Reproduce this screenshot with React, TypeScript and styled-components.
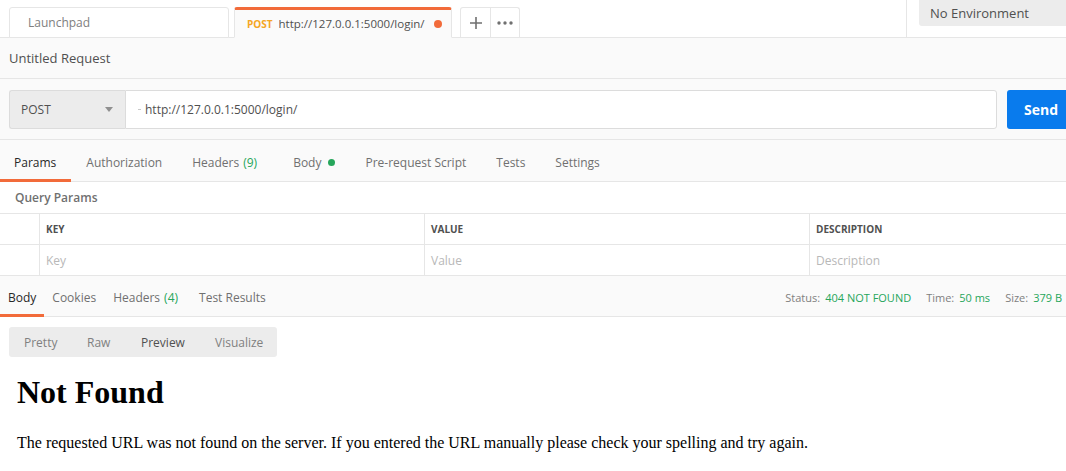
import React from "react";
import styled, { createGlobalStyle } from "styled-components";

const Global = createGlobalStyle`
  html, body { margin: 0; padding: 0; background: #ffffff; }
  body { font-family: "Open Sans", "Liberation Sans", sans-serif; overflow: hidden; }
  * { box-sizing: border-box; }
`;

const Page = styled.div`
  width: 1066px;
  height: 471px;
  display: flex;
  flex-direction: column;
  overflow: hidden;
`;

const TopBar = styled.div`
  height: 38px;
  display: flex;
  align-items: stretch;
  background: #ffffff;
  border-bottom: 1px solid #e6e6e6;
`;

const TabStrip = styled.div`
  flex: 1;
  display: flex;
  align-items: flex-end;
  padding-left: 9px;
  gap: 5px;
`;

const ReqTab = styled.div<{ $active?: boolean; $w: number; $padL: number }>`
  width: ${(p) => p.$w}px;
  height: 31px;
  margin-bottom: -1px;
  display: flex;
  align-items: center;
  padding: 0 9px 0 ${(p) => p.$padL}px;
  font-size: ${(p) => (p.$active ? "11.5px" : "12px")};
  color: ${(p) => (p.$active ? "#505050" : "#808080")};
  background: ${(p) => (p.$active ? "#fafafa" : "#ffffff")};
  border: 1px solid #e6e6e6;
  border-bottom: ${(p) => (p.$active ? "1px solid #fafafa" : "1px solid #e6e6e6")};
  border-top: ${(p) => (p.$active ? "3px solid #f26b3a" : "1px solid #e6e6e6")};
  border-radius: 3px 3px 0 0;
  white-space: nowrap;
  overflow: hidden;
`;

const Method = styled.span`
  font-size: 10px;
  font-weight: 700;
  color: #f5a623;
  margin-right: 6px;
`;

const TabLabel = styled.span`
  flex: 1;
  min-width: 0;
  overflow: hidden;
`;

const Dot = styled.span<{ $color: string; $size: number }>`
  display: inline-block;
  flex: none;
  width: ${(p) => p.$size}px;
  height: ${(p) => p.$size}px;
  border-radius: 50%;
  background: ${(p) => p.$color};
`;

const IconGroup = styled.div`
  display: flex;
  height: 30px;
  margin-left: 3px;
  border: 1px solid #e6e6e6;
  border-bottom: none;
  border-radius: 3px 3px 0 0;
  background: #ffffff;
`;

const IconBtn = styled.div<{ $first?: boolean }>`
  width: 29px;
  display: flex;
  align-items: center;
  justify-content: center;
  color: #707070;
  border-left: ${(p) => (p.$first ? "none" : "1px solid #e6e6e6")};
`;

const EnvArea = styled.div`
  width: 160px;
  border-left: 1px solid #e6e6e6;
  padding-left: 12px;
`;

const EnvBox = styled.div`
  height: 26px;
  background: #ececec;
  border-radius: 0 0 0 3px;
  padding-left: 11px;
  display: flex;
  align-items: center;
  font-size: 13px;
  color: #505050;
`;

const Main = styled.div`
  background: #fafafa;
  display: flex;
  flex-direction: column;
`;

const TitleRow = styled.div`
  height: 41px;
  display: flex;
  align-items: center;
  padding-left: 9px;
  font-size: 13px;
  color: #505050;
  border-bottom: 1px solid #e6e6e6;
`;

const UrlRow = styled.div`
  height: 61px;
  display: flex;
  align-items: center;
  padding: 0 0 0 9px;
  border-bottom: 1px solid #e6e6e6;
`;

const MethodSelect = styled.div`
  width: 116px;
  height: 39px;
  display: flex;
  align-items: center;
  justify-content: space-between;
  padding: 0 12px 0 11px;
  background: #ececec;
  border: 1px solid #dcdcdc;
  border-right: none;
  border-radius: 3px 0 0 3px;
  font-size: 12px;
  color: #505050;
`;

const Caret = styled.span`
  width: 0;
  height: 0;
  border-left: 4px solid transparent;
  border-right: 4px solid transparent;
  border-top: 5px solid #909090;
`;

const UrlInput = styled.div`
  width: 872px;
  height: 39px;
  display: flex;
  align-items: center;
  padding-left: 12px;
  background: #ffffff;
  border: 1px solid #dcdcdc;
  border-radius: 0 3px 3px 0;
  font-size: 12px;
  color: #505050;
`;

const Cursor = styled.span`
  width: 3px;
  height: 1px;
  background: #c8c8c8;
  margin-right: 4px;
`;

const SendBtn = styled.div`
  margin-left: 10px;
  height: 39px;
  flex: 1;
  display: flex;
  align-items: center;
  padding-left: 17px;
  background: #097bed;
  border-radius: 3px 0 0 3px;
  color: #ffffff;
  font-size: 14px;
  font-weight: 700;
`;

const TabsRow = styled.div<{ $h: number }>`
  height: ${(p) => p.$h}px;
  display: flex;
  align-items: stretch;
  border-bottom: 1px solid #e6e6e6;
  background: #fafafa;
`;

const NavTab = styled.div<{ $active?: boolean; $l: number; $r: number }>`
  position: relative;
  display: flex;
  align-items: center;
  gap: 7px;
  padding: 3px ${(p) => p.$r}px 0 ${(p) => p.$l}px;
  font-size: 12px;
  color: ${(p) => (p.$active ? "#282828" : "#707070")};
  &::after {
    content: "";
    display: ${(p) => (p.$active ? "block" : "none")};
    position: absolute;
    left: 0;
    right: 0;
    bottom: -1px;
    height: 3px;
    background: #f26b3a;
  }
`;

const Count = styled.span`
  color: #26a65b;
  margin-left: 4px;
`;

const ParamsArea = styled.div`
  background: #ffffff;
`;

const SectionTitle = styled.div`
  height: 32px;
  display: flex;
  align-items: center;
  padding-left: 15px;
  font-size: 12px;
  font-weight: 600;
  color: #707070;
  border-bottom: 1px solid #e6e6e6;
`;

const TableRow = styled.div`
  display: grid;
  grid-template-columns: 39px 385px 385px 1fr;
  height: 31px;
  border-bottom: 1px solid #e6e6e6;
`;

const Cell = styled.div<{ $head?: boolean }>`
  display: flex;
  align-items: center;
  padding-left: 6px;
  border-left: 1px solid #e6e6e6;
  font-size: ${(p) => (p.$head ? "10px" : "12px")};
  font-weight: ${(p) => (p.$head ? 700 : 400)};
  color: ${(p) => (p.$head ? "#505050" : "#b8b8b8")};
  &:first-child { border-left: none; }
`;

const Stats = styled.div`
  margin-left: auto;
  display: flex;
  align-items: center;
  gap: 15px;
  padding: 2px 4px 0 0;
  font-size: 11px;
  color: #808080;
`;

const Stat = styled.span`
  display: flex;
  gap: 5px;
`;

const Green = styled.span`
  color: #26a65b;
`;

const ResponseBody = styled.div`
  flex: 1;
  background: #ffffff;
  padding: 10px 9px 0 9px;
`;

const Segmented = styled.div`
  width: 268px;
  height: 30px;
  display: flex;
  align-items: center;
  background: #ececec;
  border-radius: 3px;
  padding-left: 15px;
`;

const Seg = styled.span<{ $active?: boolean; $w: number }>`
  width: ${(p) => p.$w}px;
  font-size: 12px;
  color: ${(p) => (p.$active ? "#505050" : "#808080")};
`;

const Preview = styled.div`
  padding-left: 8px;
  font-family: "Liberation Serif", "Times New Roman", serif;
  color: #000000;
`;

const H1 = styled.h1`
  font-size: 32px;
  font-weight: 700;
  margin: 17px 0 0 0;
  line-height: 37px;
`;

const P = styled.p`
  font-size: 16px;
  margin: 22px 0 0 0;
  line-height: 20px;
`;

export default function App() {
  return (
    <Page>
      <Global />
      <TopBar>
        <TabStrip>
          <ReqTab $w={220} $padL={18}>
            <TabLabel>Launchpad</TabLabel>
          </ReqTab>
          <ReqTab $active $w={218} $padL={12}>
            <Method>POST</Method>
            <TabLabel>http://127.0.0.1:5000/login/</TabLabel>
            <Dot $color="#f26b3a" $size={8} />
          </ReqTab>
          <IconGroup>
            <IconBtn $first>
              <svg width="14" height="14" viewBox="0 0 14 14">
                <path d="M7 1v12M1 7h12" stroke="#707070" strokeWidth="1.6" />
              </svg>
            </IconBtn>
            <IconBtn>
              <svg width="16" height="4" viewBox="0 0 16 4">
                <circle cx="2" cy="2" r="1.7" fill="#707070" />
                <circle cx="8" cy="2" r="1.7" fill="#707070" />
                <circle cx="14" cy="2" r="1.7" fill="#707070" />
              </svg>
            </IconBtn>
          </IconGroup>
        </TabStrip>
        <EnvArea>
          <EnvBox>No Environment</EnvBox>
        </EnvArea>
      </TopBar>
      <Main>
        <TitleRow>Untitled Request</TitleRow>
        <UrlRow>
          <MethodSelect>
            POST
            <Caret />
          </MethodSelect>
          <UrlInput>
            <Cursor />
            http://127.0.0.1:5000/login/
          </UrlInput>
          <SendBtn>Send</SendBtn>
        </UrlRow>
        <TabsRow $h={42}>
          <NavTab $active $l={14} $r={15}>Params</NavTab>
          <NavTab $l={15} $r={15}>Authorization</NavTab>
          <NavTab $l={15} $r={17}>
            <span>
              Headers<Count>(9)</Count>
            </span>
          </NavTab>
          <NavTab $l={19} $r={15}>
            Body
            <Dot $color="#26a65b" $size={7} />
          </NavTab>
          <NavTab $l={15} $r={15}>Pre-request Script</NavTab>
          <NavTab $l={15} $r={15}>Tests</NavTab>
          <NavTab $l={15} $r={15}>Settings</NavTab>
        </TabsRow>
        <ParamsArea>
          <SectionTitle>Query Params</SectionTitle>
          <TableRow>
            <Cell $head />
            <Cell $head>KEY</Cell>
            <Cell $head>VALUE</Cell>
            <Cell $head>DESCRIPTION</Cell>
          </TableRow>
          <TableRow>
            <Cell />
            <Cell>Key</Cell>
            <Cell>Value</Cell>
            <Cell>Description</Cell>
          </TableRow>
        </ParamsArea>
        <TabsRow $h={41}>
          <NavTab $active $l={8} $r={8}>Body</NavTab>
          <NavTab $l={8} $r={8}>Cookies</NavTab>
          <NavTab $l={9} $r={11}>
            <span>
              Headers<Count>(4)</Count>
            </span>
          </NavTab>
          <NavTab $l={10} $r={10}>Test Results</NavTab>
          <Stats>
            <Stat>
              Status: <Green>404 NOT FOUND</Green>
            </Stat>
            <Stat>
              Time: <Green>50 ms</Green>
            </Stat>
            <Stat>
              Size: <Green>379 B</Green>
            </Stat>
          </Stats>
        </TabsRow>
      </Main>
      <ResponseBody>
        <Segmented>
          <Seg $w={63}>Pretty</Seg>
          <Seg $w={54}>Raw</Seg>
          <Seg $active $w={74}>Preview</Seg>
          <Seg $w={60}>Visualize</Seg>
        </Segmented>
        <Preview>
          <H1>Not Found</H1>
          <P>
            The requested URL was not found on the server. If you entered the URL manually please check your
            spelling and try again.
          </P>
        </Preview>
      </ResponseBody>
    </Page>
  );
}
